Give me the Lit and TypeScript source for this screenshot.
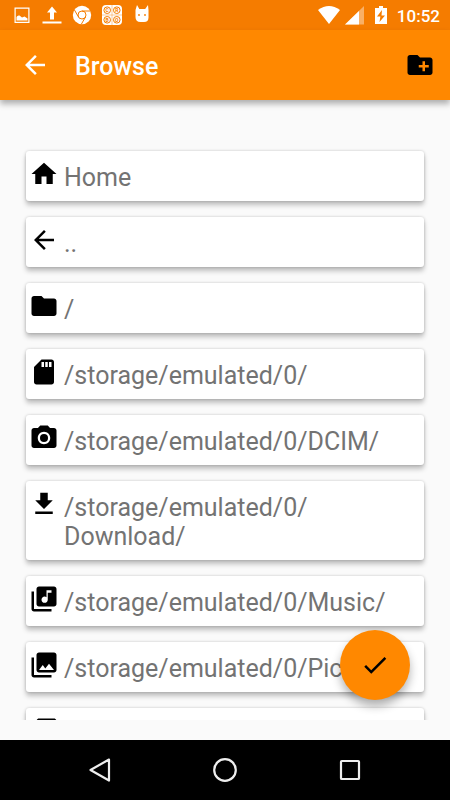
import { LitElement, html, css, svg } from "lit";
import { customElement, property } from "lit/decorators.js";

const glyphs: Record<string, unknown> = {
  home: svg`<path d="M10 20v-6h4v6h5v-8h3L12 3 2 12h3v8z"/>`,
  back: svg`<path d="M20 11H7.83l5.59-5.59L12 4l-8 8 8 8 1.41-1.41L7.83 13H20v-2z"/>`,
  folder: svg`<path d="M10 4H4c-1.100 0-1.990.9-1.990 2L2 18c0 1.100.9 2 2 2h16c1.100 0 2-.9 2-2V8c0-1.100-.9-2-2-2h-8l-2-2z"/>`,
  sd: svg`<path d="M18 2h-8L4.020 8 4 20c0 1.100.9 2 2 2h12c1.100 0 2-.9 2-2V4c0-1.100-.9-2-2-2zm-6 6h-2V4h2v4zm3 0h-2V4h2v4zm3 0h-2V4h2v4z"/>`,
  camera: svg`<circle cx="12" cy="12" r="3.200"/><path d="M9 2L7.170 4H4c-1.100 0-2 .9-2 2v12c0 1.100.9 2 2 2h16c1.100 0 2-.9 2-2V6c0-1.100-.9-2-2-2h-3.170L15 2H9zm3 15c-2.760 0-5-2.240-5-5s2.240-5 5-5 5 2.240 5 5-2.240 5-5 5z"/>`,
  download: svg`<path d="M19 9h-4V3H9v6H5l7 7 7-7zM5 18v2h14v-2H5z"/>`,
  music: svg`<path d="M20 2H8c-1.100 0-2 .9-2 2v12c0 1.100.9 2 2 2h12c1.100 0 2-.9 2-2V4c0-1.100-.9-2-2-2zm-2 5h-3v5.500c0 1.380-1.120 2.500-2.500 2.500S10 13.880 10 12.500s1.120-2.500 2.500-2.500c.57 0 1.080.19 1.500.51V5h4v2zM4 6H2v14c0 1.100.9 2 2 2h14v-2H4V6z"/>`,
  pictures: svg`<path d="M22 16V4c0-1.100-.9-2-2-2H8c-1.100 0-2 .9-2 2v12c0 1.100.9 2 2 2h12c1.100 0 2-.9 2-2zm-11-4l2.030 2.710L16 11l4 5H8l3-4zM2 6v14c0 1.100.9 2 2 2h14v-2H4V6H2z"/>`,
  movies: svg`<path d="M4 6H2v14c0 1.100.9 2 2 2h14v-2H4V6zm16-4H8c-1.100 0-2 .9-2 2v12c0 1.100.9 2 2 2h12c1.100 0 2-.9 2-2V4c0-1.100-.9-2-2-2zm-8 12.500v-9l6 4.500-6 4.500z"/>`,
  newFolder: svg`<path d="M20 6h-8l-2-2H4c-1.110 0-1.990.89-1.990 2L2 18c0 1.110.89 2 2 2h16c1.110 0 2-.89 2-2V8c0-1.110-.89-2-2-2zm-1 8h-3v3h-2v-3h-3v-2h3V9h2v3h3v2z"/>`,
  check: svg`<path d="M9 16.170L4.830 12l-1.420 1.410L9 19 21 7l-1.410-1.410z"/>`,
  navBack: svg`<path d="M21 1.500L2.500 12 21 22.500z" fill="none" stroke="currentColor" stroke-width="2.200" stroke-linejoin="round"/>`,
  navHome: svg`<circle cx="12" cy="12" r="10.800" fill="none" stroke="currentColor" stroke-width="2.200"/>`,
  navRecent: svg`<rect x="3" y="3" width="18" height="18" rx=".8" fill="none" stroke="currentColor" stroke-width="2.200"/>`,
  image: svg`<path fill-rule="evenodd" d="M4.500 4.500h15v15.500h-15zM5.700 5.700v13h12.600v-13z"/><path d="M6.500 17.500v-3.500q1-2 3-1.500l2.500 2 2.500-1 3 2v2z"/>`,
  upload: svg`<path d="M12 3.500l5 6h-3v7h-4v-7H7zM2.500 18.500h19v2h-19z"/>`,
  chrome: svg`<circle cx="12" cy="12" r="9.200"/><g fill="none" stroke="#f57c00" stroke-width="1"><circle cx="12" cy="12" r="4"/><path d="M12 8h8.200M8.500 14L4.400 6.900M15.500 14l-4.100 7.100"/></g>`,
  grid: svg`<rect x="2" y="2" width="20" height="20" rx="4"/><g fill="none" stroke="#f57c00"><circle cx="7.200" cy="7.200" r="3.300"/><circle cx="16.800" cy="7.200" r="3.300"/><circle cx="7.200" cy="16.800" r="3.300"/><circle cx="16.800" cy="16.800" r="3.300"/><path stroke-width=".4" d="M12 2v20M2 12h20"/></g><g fill="#f57c00" font-family="Roboto, sans-serif" font-size="5" font-weight="700" text-anchor="middle"><text x="7.200" y="9">C</text><text x="16.800" y="9">R</text><text x="7.200" y="18.600">B</text><text x="16.800" y="18.600">O</text></g>`,
  robot: svg`<path d="M7 2l2.300 4h5.900L18 2l.5 5v7.500q0 4.500-4.500 4.500h-3.500q-5 0-5-5V7z"/><circle cx="9" cy="12" r=".9" fill="#f57c00"/><circle cx="15" cy="12" r=".9" fill="#f57c00"/>`,
  wifi: svg`<path d="M1 7q11-8 22 0L12 21z"/>`,
  signal: svg`<path opacity=".4" d="M2 21.500h19V3z"/><path d="M2 21.500h14V8z"/>`,
  battery: svg`<path fill-rule="evenodd" d="M10 3h4v2h4v16H6V5h4zM13 7l-5 6.500h3.400L10.500 19l5.500-6.500h-3.500z"/>`,
};

@customElement("ui-icon")
class UiIcon extends LitElement {
  static styles = css`
    :host { display: block; flex: none; width: 24px; height: 24px; }
    svg { display: block; width: 100%; height: 100%; fill: currentColor; }
  `;
  @property() name = "";
  render() {
    return html`<svg viewBox="0 0 24 24" aria-hidden="true">${glyphs[this.name]}</svg>`;
  }
}

const places = [
  ["home", "Home"],
  ["back", ".."],
  ["folder", "/"],
  ["sd", "/storage/emulated/0/"],
  ["camera", "/storage/emulated/0/DCIM/"],
  ["download", "/storage/emulated/0/Download/"],
  ["music", "/storage/emulated/0/Music/"],
  ["pictures", "/storage/emulated/0/Pictures/"],
  ["movies", "/storage/emulated/0/Movies/"],
];

// Lets a long path break after its slashes only.
const breakable = (path: string) =>
  path.split(/(?<=\/)(?=.)/).map((part, i) => (i ? html`<wbr>${part}` : part));

@customElement("app-root")
class AppRoot extends LitElement {
  static styles = css`
    :host {
      display: flex;
      flex-direction: column;
      height: 100vh;
      background: #fafafa;
      font-family: Roboto, sans-serif;
    }
    button {
      border: 0;
      margin: 0;
      padding: 0;
      background: none;
      color: inherit;
      font: inherit;
      text-align: left;
      cursor: pointer;
    }
    .status {
      flex: none;
      display: flex;
      align-items: center;
      justify-content: space-between;
      height: 30px;
      padding: 0 10px;
      background: #f57c00;
      color: #fff;
    }
    .notes, .system { display: flex; align-items: center; }
    .notes { gap: 6px; }
    .system { gap: 2px; }
    .time {
      padding: 2px 0 0 2px;
      font-size: 17px;
      font-weight: 500;
      line-height: 28px;
    }
    .toolbar {
      flex: none;
      z-index: 1;
      display: flex;
      align-items: center;
      height: 70px;
      padding: 0 15px 0 20px;
      background: #ff8800;
      color: #fff;
      box-shadow: 0 4px 6px rgba(0, 0, 0, 0.3);
    }
    .toolbar ui-icon { width: 30px; height: 30px; }
    .title {
      flex: 1;
      margin: 0;
      padding: 4px 0 0 25px;
      font-size: 25px;
      font-weight: 500;
      line-height: 30px;
    }
    .add { color: #000; }
    .main {
      position: relative;
      flex: 1;
      min-height: 0;
      display: flex;
      flex-direction: column;
      padding-bottom: 20px;
    }
    .list {
      flex: 1;
      min-height: 0;
      overflow: hidden;
      display: flex;
      flex-direction: column;
      gap: 16px;
      margin: 0;
      padding: 51px 26px 0;
      list-style: none;
    }
    .item { flex: none; }
    .card {
      display: flex;
      align-items: flex-start;
      gap: 5px;
      box-sizing: border-box;
      width: 100%;
      padding: 8px 8px 9px 3px;
      border-radius: 3px;
      background: #fff;
      box-shadow: 0 4px 5px rgba(0, 0, 0, 0.24), 0 0 3px rgba(0, 0, 0, 0.2);
    }
    .card ui-icon { width: 30px; height: 30px; }
    .label {
      flex: 1;
      padding-top: 4px;
      color: #737373;
      font-size: 25px;
      line-height: 29px;
    }
    .fab {
      position: absolute;
      right: 40px;
      bottom: 40px;
      display: grid;
      place-items: center;
      width: 70px;
      height: 70px;
      border-radius: 50%;
      background: #ff8800;
      color: #000;
      box-shadow: 0 6px 10px rgba(0, 0, 0, 0.3);
    }
    .fab ui-icon { width: 30px; height: 30px; }
    .nav {
      flex: none;
      display: flex;
      align-items: center;
      justify-content: center;
      gap: 101px;
      height: 60px;
      background: #000;
      color: #eee;
    }
  `;

  render() {
    return html`
      <div class="status">
        <div class="notes">
          ${["image", "upload", "chrome", "grid", "robot"].map((n) => html`<ui-icon name=${n}></ui-icon>`)}
        </div>
        <div class="system">
          ${["wifi", "signal", "battery"].map((n) => html`<ui-icon name=${n}></ui-icon>`)}
          <span class="time">10:52</span>
        </div>
      </div>
      <header class="toolbar">
        <button aria-label="Back"><ui-icon name="back"></ui-icon></button>
        <h1 class="title">Browse</h1>
        <button class="add" aria-label="New folder"><ui-icon name="newFolder"></ui-icon></button>
      </header>
      <main class="main">
        <ul class="list">
          ${places.map(
            ([icon, path]) => html`<li class="item">
              <button class="card"><ui-icon name=${icon}></ui-icon><span class="label">${breakable(path)}</span></button>
            </li>`
          )}
        </ul>
        <button class="fab" aria-label="Select"><ui-icon name="check"></ui-icon></button>
      </main>
      <nav class="nav">
        <button aria-label="System back"><ui-icon name="navBack"></ui-icon></button>
        <button aria-label="System home"><ui-icon name="navHome"></ui-icon></button>
        <button aria-label="Recent apps"><ui-icon name="navRecent"></ui-icon></button>
      </nav>
    `;
  }
}
